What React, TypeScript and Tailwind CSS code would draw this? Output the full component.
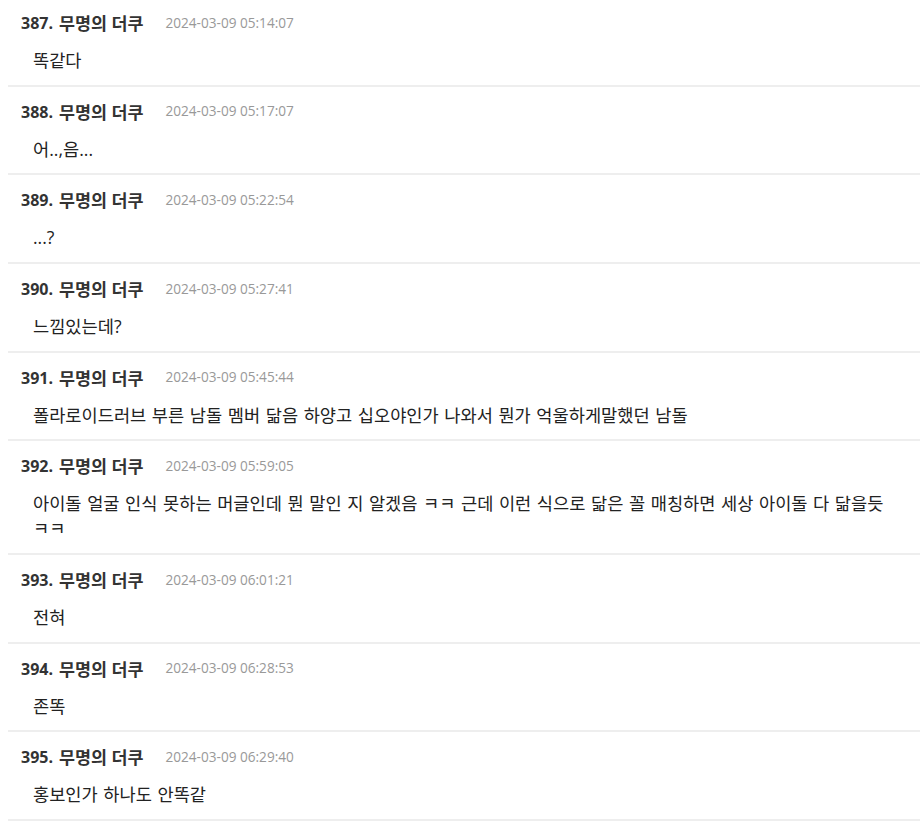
import React from 'react'

interface Comment {
  no: number
  name: string
  date: string
  body: string
}

const comments: Comment[] = [
  { no: 387, name: '무명의 더쿠', date: '2024-03-09 05:14:07', body: '똑같다' },
  { no: 388, name: '무명의 더쿠', date: '2024-03-09 05:17:07', body: '어..,음...' },
  { no: 389, name: '무명의 더쿠', date: '2024-03-09 05:22:54', body: '...?' },
  { no: 390, name: '무명의 더쿠', date: '2024-03-09 05:27:41', body: '느낌있는데?' },
  {
    no: 391,
    name: '무명의 더쿠',
    date: '2024-03-09 05:45:44',
    body: '폴라로이드러브 부른 남돌 멤버 닮음 하양고 십오야인가 나와서 뭔가 억울하게말했던 남돌',
  },
  {
    no: 392,
    name: '무명의 더쿠',
    date: '2024-03-09 05:59:05',
    body: '아이돌 얼굴 인식 못하는 머글인데 뭔 말인 지 알겠음 ㅋㅋ 근데 이런 식으로 닮은 꼴 매칭하면 세상 아이돌 다 닮을듯 ㅋㅋ',
  },
  { no: 393, name: '무명의 더쿠', date: '2024-03-09 06:01:21', body: '전혀' },
  { no: 394, name: '무명의 더쿠', date: '2024-03-09 06:28:53', body: '존똑' },
  { no: 395, name: '무명의 더쿠', date: '2024-03-09 06:29:40', body: '홍보인가 하나도 안똑같' },
]

function CommentRow({ c }: { c: Comment }) {
  return (
    <li className="border-b-2 border-[#eeeeee] pt-[13px] pb-[11.67px] pl-[13px]">
      <div className="flex items-center h-[24px] font-bold text-[#333333]">
        <span className="text-[16px]">{c.no}.</span>
        <span className="ml-[6px] text-[17.4px]">{c.name}</span>
        <span className="ml-[22px] text-[13.6px] font-normal text-[#999999]">{c.date}</span>
      </div>
      <p className="mt-[13px] pl-[12px] pr-[20px] text-[17.6px] leading-[25px] text-[#222222] break-keep [word-spacing:1px]">
        {c.body}
      </p>
    </li>
  )
}

export default function App() {
  return (
    <div
      className="min-h-screen bg-white overflow-hidden"
      style={{ fontFamily: '"Open Sans", "Noto Sans CJK KR", sans-serif' }}
    >
      <ul className="ml-[8px] -mt-[2px]">
        {comments.map((c) => (
          <CommentRow key={c.no} c={c} />
        ))}
      </ul>
    </div>
  )
}
